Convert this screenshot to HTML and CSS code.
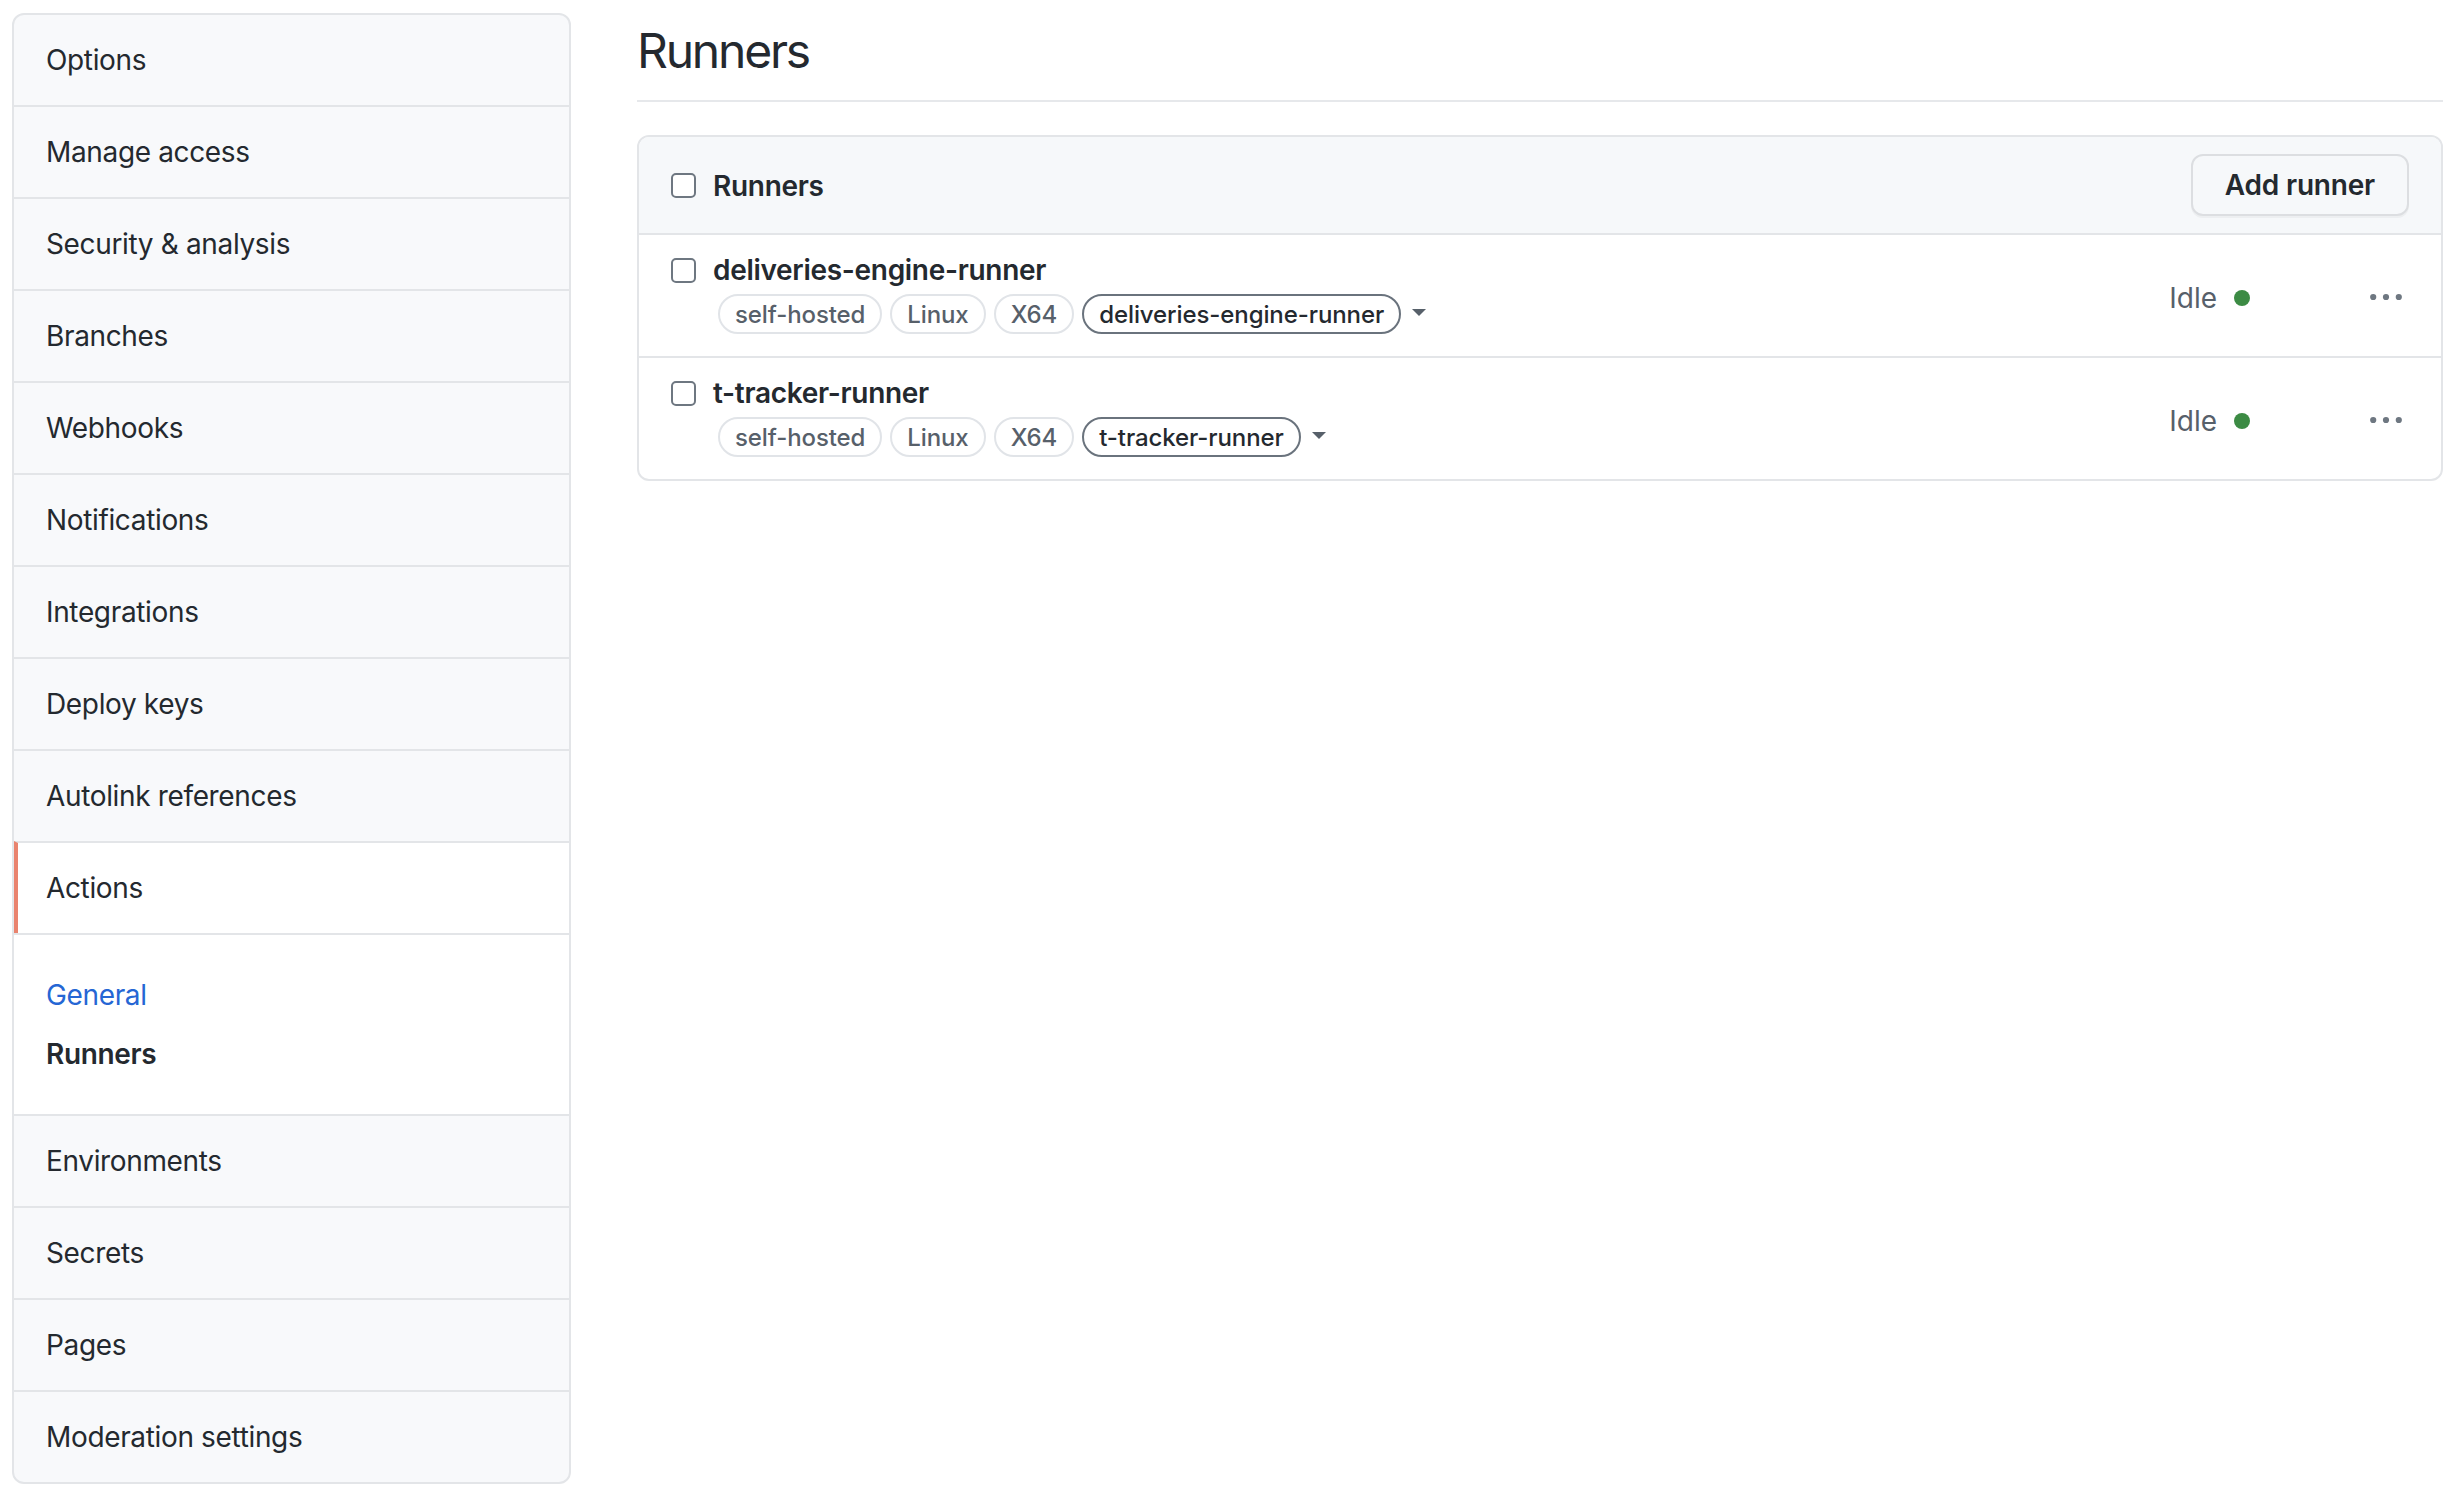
FILE: index.html
```html
<!DOCTYPE html>
<html lang="en">
<head>
<meta charset="utf-8">
<title>Runners</title>
<link rel="stylesheet" href="styles.css">
</head>
<body>
<nav class="sidebar">
  <div class="menu-item">Options</div>
  <div class="menu-item">Manage access</div>
  <div class="menu-item">Security &amp; analysis</div>
  <div class="menu-item">Branches</div>
  <div class="menu-item">Webhooks</div>
  <div class="menu-item">Notifications</div>
  <div class="menu-item">Integrations</div>
  <div class="menu-item">Deploy keys</div>
  <div class="menu-item">Autolink references</div>
  <div class="menu-item selected">Actions</div>
  <div class="subnav">
    <div class="subnav-item link">General</div>
    <div class="subnav-item current">Runners</div>
  </div>
  <div class="menu-item">Environments</div>
  <div class="menu-item">Secrets</div>
  <div class="menu-item">Pages</div>
  <div class="menu-item">Moderation settings</div>
</nav>
<main class="main">
  <h1 class="subhead">Runners</h1>
  <div class="box">
    <div class="box-header">
      <span class="checkbox"></span>
      <span class="header-title">Runners</span>
      <button class="btn">Add runner</button>
    </div>
    <div class="runner">
      <div class="runner-main">
        <div class="runner-title"><span class="checkbox"></span><span class="name">deliveries-engine-runner</span></div>
        <div class="labels">
          <span class="label">self-hosted</span>
          <span class="label">Linux</span>
          <span class="label">X64</span>
          <span class="label custom">deliveries-engine-runner</span>
          <svg class="caret" width="14" height="8" viewBox="0 0 14 8"><path d="M0 0h14L7 7z" fill="#57606a"/></svg>
        </div>
      </div>
      <div class="status">Idle<span class="dot"></span></div>
      <svg class="kebab" width="32" height="8" viewBox="0 0 32 8"><circle cx="3.2" cy="4" r="3.1" fill="#6e7781"/><circle cx="16" cy="4" r="3.1" fill="#6e7781"/><circle cx="28.8" cy="4" r="3.1" fill="#6e7781"/></svg>
    </div>
    <div class="runner">
      <div class="runner-main">
        <div class="runner-title"><span class="checkbox"></span><span class="name">t-tracker-runner</span></div>
        <div class="labels">
          <span class="label">self-hosted</span>
          <span class="label">Linux</span>
          <span class="label">X64</span>
          <span class="label custom">t-tracker-runner</span>
          <svg class="caret" width="14" height="8" viewBox="0 0 14 8"><path d="M0 0h14L7 7z" fill="#57606a"/></svg>
        </div>
      </div>
      <div class="status">Idle<span class="dot"></span></div>
      <svg class="kebab" width="32" height="8" viewBox="0 0 32 8"><circle cx="3.2" cy="4" r="3.1" fill="#6e7781"/><circle cx="16" cy="4" r="3.1" fill="#6e7781"/><circle cx="28.8" cy="4" r="3.1" fill="#6e7781"/></svg>
    </div>
  </div>
</main>
</body>
</html>
```
FILE: styles.css
```css
* { box-sizing: border-box; }
html, body { background: #ffffff; }
body {
  margin: 0;
  padding: 13px 15px 0 12px;
  display: flex;
  align-items: flex-start;
  gap: 66px;
  font-family: Inter, "Noto Sans", "Liberation Sans", sans-serif;
  color: #24292f;
  font-size: 28px;
}
.sidebar {
  width: 559px;
  flex: none;
  border: 2px solid #e3e5e8;
  border-radius: 12px;
  overflow: hidden;
  background: #f8f9fb;
}
.menu-item {
  height: 92px;
  padding-left: 32px;
  line-height: 90px;
  border-top: 2px solid #e3e5e8;
  letter-spacing: -0.35px;
}
.menu-item:first-child { border-top: none; height: 90px; }
.menu-item.selected {
  background: #ffffff;
  border-left: 4px solid #e9836e;
  padding-left: 28px;
}
.subnav {
  background: #ffffff;
  border-top: 2px solid #e3e5e8;
  padding: 31px 0 31px 32px;
}
.subnav-item {
  line-height: 58.5px;
  letter-spacing: -0.35px;
}
.subnav-item.link { color: #2566d4; }
.subnav-item.current { font-weight: 600; }
.main {
  flex: 1;
  min-width: 0;
}
.subhead {
  margin: 0;
  font-size: 48px;
  font-weight: 400;
  line-height: 72px;
  letter-spacing: -2.2px;
  padding-top: 2px;
  padding-bottom: 13px;
  border-bottom: 2px solid #e6e8eb;
}
.box {
  margin-top: 33px;
  border: 2px solid #e3e5e8;
  border-radius: 12px;
  overflow: hidden;
}
.box-header {
  height: 98px;
  background: #f6f8fa;
  border-bottom: 2px solid #e3e5e8;
  display: flex;
  align-items: center;
  padding: 0 32px;
}
.checkbox {
  width: 25px;
  height: 25px;
  flex: none;
  border: 2px solid #6e7781;
  border-radius: 5px;
  background: #ffffff;
}
.header-title {
  margin-left: 17px;
  font-weight: 600;
  letter-spacing: -0.3px;
  padding-top: 2px;
}
.btn {
  margin-left: auto;
  height: 62px;
  padding: 0 32px;
  font-family: inherit;
  font-size: 28px;
  font-weight: 600;
  color: #24292f;
  background: #f6f8fa;
  border: 2px solid #dcdee1;
  border-radius: 12px;
  letter-spacing: -0.2px;
  box-shadow: 0 2px 0 rgba(27, 31, 36, 0.04);
}
.runner {
  height: 123px;
  padding: 17px 32px 22px 32px;
  display: flex;
  align-items: center;
  border-bottom: 2px solid #e3e5e8;
}
.runner:last-child { border-bottom: none; height: 121px; }
.runner-main {
  align-self: flex-start;
}
.runner-title {
  height: 36px;
  display: flex;
  align-items: center;
  gap: 17px;
}
.name {
  font-weight: 600;
  letter-spacing: -0.3px;
}
.labels {
  margin-top: 6px;
  margin-left: 47px;
  display: flex;
  align-items: center;
  gap: 8px;
}
.label {
  height: 40px;
  display: inline-flex;
  align-items: center;
  padding: 0 15px;
  border: 2px solid #e1e4e8;
  border-radius: 20px;
  font-size: 24px;
  color: #57606a;
  font-weight: 500;
  letter-spacing: -0.1px;
}
.label.custom {
  border-color: #6a737d;
  color: #24292f;
}
.caret {
  margin-left: 3px;
  margin-top: -2px;
}
.status {
  margin-left: auto;
  display: flex;
  align-items: center;
  color: #57606a;
  padding-top: 9px;
}
.dot {
  width: 16px;
  height: 16px;
  border-radius: 50%;
  background: #3c8b44;
  margin-left: 17px;
}
.kebab {
  margin-left: 120px;
  margin-right: 7px;
  margin-top: 8px;
}
```
